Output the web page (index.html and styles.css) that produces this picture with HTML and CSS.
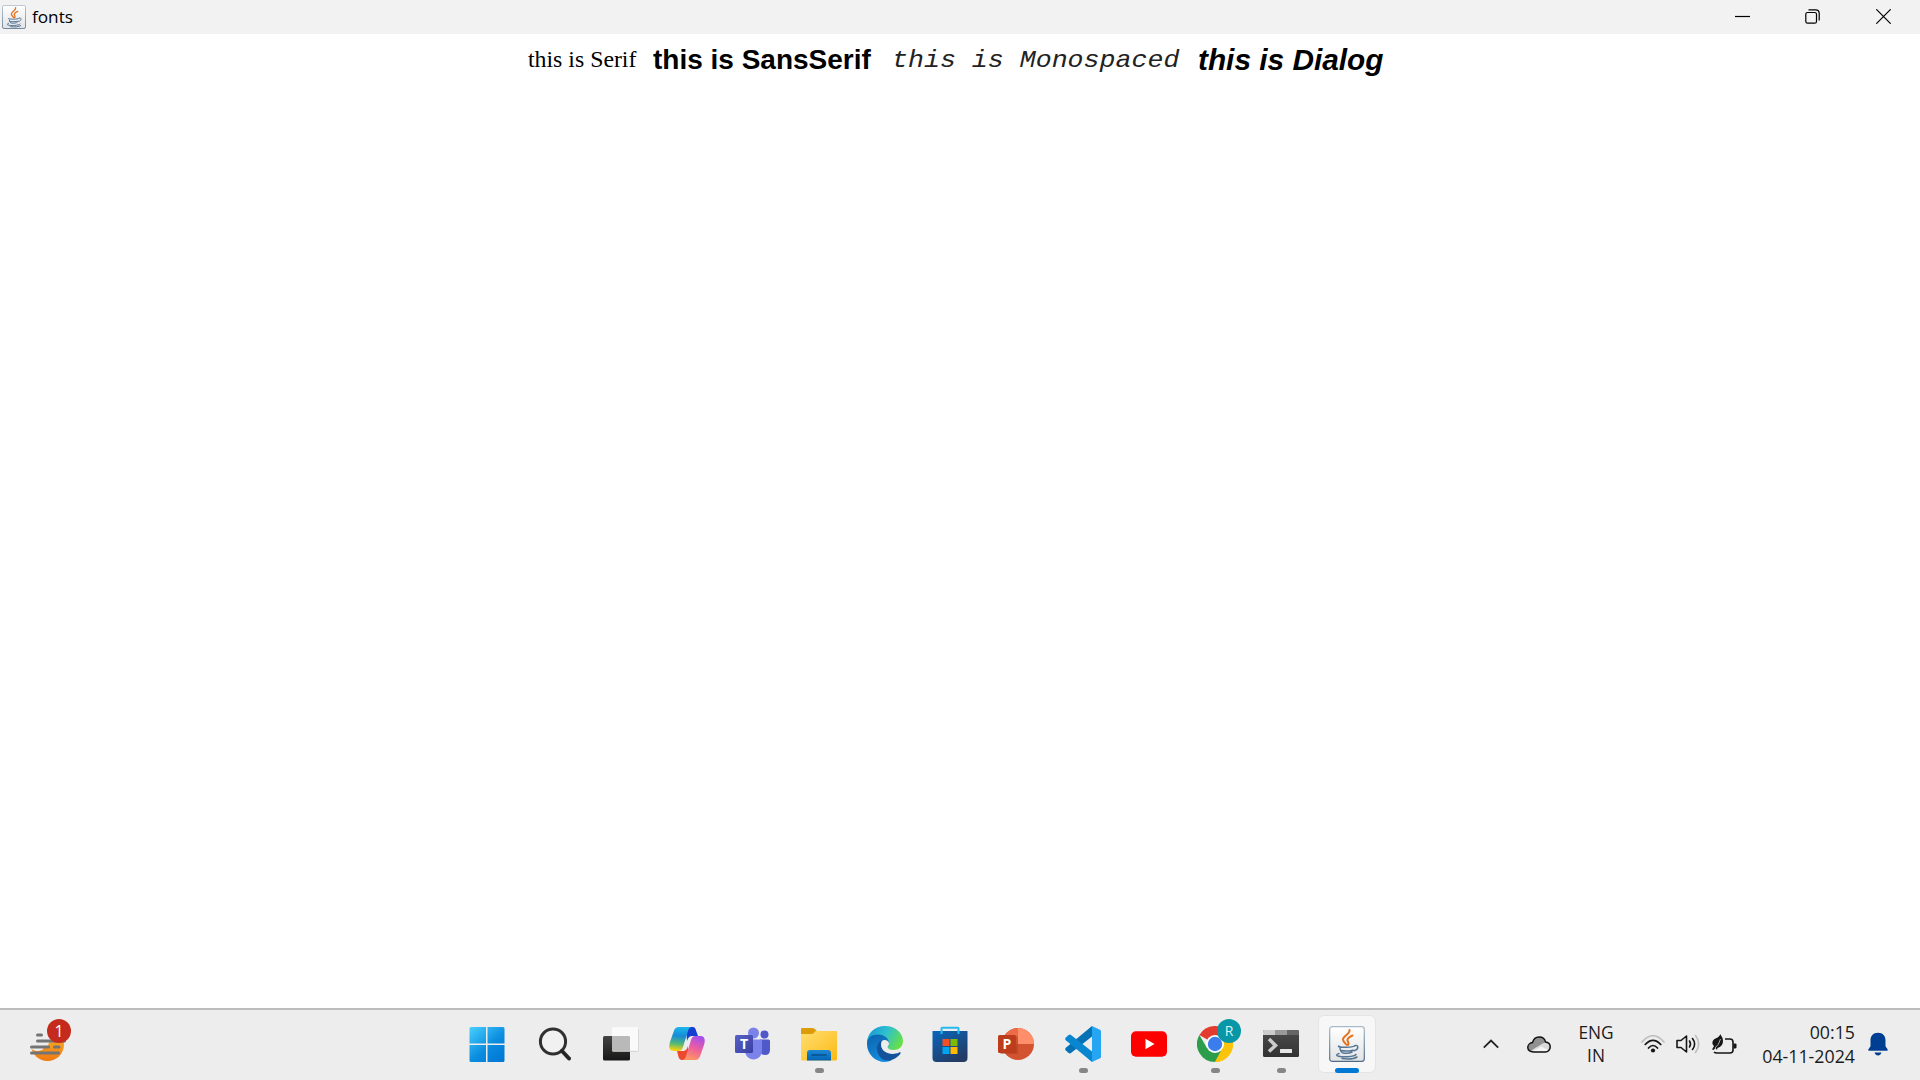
FILE: index.html
```html
<!DOCTYPE html>
<html lang="en">
<head>
<meta charset="utf-8">
<title>fonts</title>
<link rel="stylesheet" href="styles.css">
</head>
<body>
<svg class="defs" width="0" height="0" aria-hidden="true">
  <defs>
    <linearGradient id="javaBg" x2="0" y2="1"><stop stop-color="#fff"/><stop offset="1" stop-color="#e2e3e5"/></linearGradient>
    <linearGradient id="javaEdge" x2="0" y2="1"><stop stop-color="#a9bac8"/><stop offset="1" stop-color="#4e6b86"/></linearGradient>
    <symbol id="java" viewBox="0 0 36 36">
      <rect x=".7" y=".7" width="34.6" height="34.6" rx="2.5" fill="url(#javaBg)" stroke="url(#javaEdge)" stroke-width="1.2"/>
      <g fill="none" stroke-linecap="round">
        <path d="M20.5 4c1 4-6.500 5.500-6.500 9.500 0 2 2 3.500 3.500 5.200M23.500 9.500c-3 1.300-5.500 2.800-5 5 .3 1.500 2 2.500.5 4.500" stroke="#e8701a" stroke-width="2"/>
        <path d="M10 20c-2 .8 2.500 1.300 7.500 1.200 4 0 7-.5 8-1.200M11 22.500c.5 3 1 4.500 4 4.700 3 .3 6 0 8-1.200M12 24.600c4 .8 8 .6 12-.4M25.500 19.700c4.500-1.500 4.500 3.800-.5 5M10 27.500c-7 2.500 3 3.700 9 3.200 4-.3 7-1 8-2.200M13 32.500c6 .8 12 .4 15-1.500" stroke="#557594" stroke-width="1.500"/>
      </g>
    </symbol>
  </defs>
</svg>
<header class="titlebar">
  <div class="caption"><svg class="caption-icon"><use href="#java"/></svg><span>fonts</span></div>
  <div class="controls">
    <svg viewBox="0 0 15 15"><path d="M0 7.500h15" class="line"/></svg>
    <svg viewBox="0 0 15 15"><rect x=".8" y="3.500" width="10.700" height="10.700" rx="1.800" class="line"/><path d="M3.500.8h7.200q3.500 0 3.500 3.500v7.200" class="line"/></svg>
    <svg viewBox="0 0 15 15"><path d="M.3.300l14.400 14.400M14.700.300L.3 14.700" class="line"/></svg>
  </div>
</header>
<main class="canvas">
  <span class="serif">this is Serif</span>
  <span class="sans">this is SansSerif</span>
  <span class="mono">this is Monospaced</span>
  <span class="dialog">this is Dialog</span>
</main>
<footer class="taskbar">
  <div class="weather">
    <svg width="42" height="46" viewBox="0 0 42 46">
      <defs><linearGradient id="sun" x2="0" y2="1"><stop stop-color="#fbc02d"/><stop offset="1" stop-color="#f07812"/></linearGradient></defs>
      <circle cx="18.500" cy="26.500" r="16.500" fill="url(#sun)"/>
      <path d="M0 8h24v13l-4 3q0 4-4 5H0z" fill="#ededed"/>
      <ellipse cx="8.500" cy="30" rx="6" ry="3" fill="#eee"/>
      <path d="M8.500 17h4M8.500 23h27M2.500 29h17M25.500 29h4.500M2.500 35h27" stroke="#747474" stroke-width="3" stroke-linecap="round"/>
    </svg>
    <span class="count">1</span>
  </div>
  <nav class="apps">
    <div class="app start"><svg viewBox="0 0 36 36"><defs><linearGradient id="win" gradientUnits="userSpaceOnUse" x1="0" y1="0" x2="30" y2="36"><stop stop-color="#4bd3ff"/><stop offset=".6" stop-color="#0b8de0"/><stop offset="1" stop-color="#0078d4"/></linearGradient></defs><path d="M2 1h15v16.500H.5V2.500Q.5 1 2 1zM18.500 1h15.500q1.500 0 1.500 1.500v15h-17zM.5 19H17v17H2Q.5 36 .5 34.500zM18.500 19h17v15.500q0 1.500-1.500 1.500H18.500z" fill="url(#win)"/></svg></div>
    <div class="app"><svg viewBox="0 0 36 36"><circle cx="16" cy="15.500" r="12.600" fill="#f2f2f2" fill-opacity=".75" stroke="#303030" stroke-width="3"/><path d="M25 25l7 7.500" stroke="#252525" stroke-width="4" stroke-linecap="round"/></svg></div>
    <div class="app"><svg viewBox="0 0 36 36"><defs><linearGradient id="tvb" x2="0" y2="1"><stop stop-color="#454340"/><stop offset="1" stop-color="#171717"/></linearGradient></defs><rect y="10" width="27" height="24.500" rx="1.500" fill="url(#tvb)"/><path d="M9 10h16.500q1.500 0 1.500 1.500V25H9z" fill="#b9b9b9"/><path d="M10.500 1H34q1.700 0 1.700 1.700v21.500q0 1-1.200 1H27V11.500Q27 10 25.500 10H9V2.500Q9 1 10.500 1z" fill="#fafafa"/><path d="M9.500 25.300h25q1.200 0 1.200-1V3" stroke="#d2d2d2" fill="none"/></svg></div>
    <div class="app"><svg viewBox="0 0 36 36"><defs>
      <linearGradient id="cp1" x1=".3" y1="0" x2=".2" y2="1"><stop stop-color="#1cb5e9"/><stop offset=".35" stop-color="#158bd7"/><stop offset=".68" stop-color="#51b879"/><stop offset=".95" stop-color="#f3d012"/></linearGradient>
      <linearGradient id="cp2" x1=".7" y1="0" x2=".35" y2="1"><stop stop-color="#a44eed"/><stop offset=".5" stop-color="#ed5e9e"/><stop offset="1" stop-color="#ff9860"/></linearGradient></defs>
      <path d="M17 1h6c3 0 3.500 1.500 4.200 4L29 10h-5c-4 0-5 2-6 5z" fill="#153fd0"/>
      <path d="M19 34h-6c-2 0-3-1.300-3.600-3.500L8 25h5c4 0 5-2 6-5z" fill="#ed4930"/>
      <path d="M10 1h13c-2 0-3.200 1.500-4 4l-5 16c-.8 2.700-2 4-4.500 4H5c-5 0-5.500-4-4-9L4.500 6C5.500 2.500 7 1 10 1z" fill="url(#cp1)"/>
      <path d="M26 34H13c2 0 3.200-1.500 4-4l5-16c.8-2.700 2-4 4.500-4H31c5 0 5.500 4 4 9l-3.500 10c-1 3.500-2.500 5-5.500 5z" fill="url(#cp2)"/></svg></div>
    <div class="app nudged"><svg viewBox="0 0 36 36"><defs><linearGradient id="tm" x2="1" y2="1"><stop stop-color="#5861c6"/><stop offset="1" stop-color="#3a3fa2"/></linearGradient></defs><circle cx="30.500" cy="8.500" r="4" fill="#5059c9"/><path d="M26 13.500h8.500q1.500 0 1.500 1.500v9q0 5-5 5-5 0-5-5z" fill="#5059c9"/><circle cx="19.500" cy="7" r="5.500" fill="#7b83eb"/><path d="M11 13.500h15.500q1.500 0 1.500 1.500v9c0 6-4 9.500-8.500 9.500S11 30 11 24z" fill="#7b83eb"/><rect x="1" y="9" width="18" height="18" rx="1.500" fill="url(#tm)"/><text x="10" y="23" class="glyph" font-size="14">T</text></svg></div>
    <div class="app open"><svg viewBox="0 0 36 36"><defs><linearGradient id="fold" x2="1" y2="1"><stop stop-color="#ffdf70"/><stop offset="1" stop-color="#fdb915"/></linearGradient><linearGradient id="foldb" x2="0" y2="1"><stop stop-color="#1d88d5"/><stop offset="1" stop-color="#0565b5"/></linearGradient></defs><path d="M1 2h10q2 0 3 1.300L16 5h18q2 0 2 2v5H0V3q0-1 1-1z" fill="#dc9b08"/><path d="M0 8h10q2 0 3-1.300L14.500 5H35q1 0 1 1v27q0 1.500-1.500 1.500h-33Q0 34.500 0 33z" fill="url(#fold)"/><path d="M6 34.500V27q0-3 3-3h18q3 0 3 3v7.500z" fill="url(#foldb)"/><path d="M11 29h14" stroke="#06508e" stroke-width="1.600" stroke-linecap="round"/></svg></div>
    <div class="app"><svg viewBox="0 0 36 36"><defs><linearGradient id="eg" x1="0" y1=".2" x2="1" y2=".6"><stop stop-color="#1596dc"/><stop offset=".5" stop-color="#30c2cc"/><stop offset="1" stop-color="#69e044"/></linearGradient><linearGradient id="eb" x1="0" y1="0" x2=".4" y2="1"><stop stop-color="#0b63ad"/><stop offset="1" stop-color="#158bdc"/></linearGradient></defs><path d="M0 17C0 7 8 0 18 0c11 0 18 7.500 18 15 0 6-4.500 9-9.500 9-4 0-6-1.500-6-3 0-1 1.500-1.500 1.500-4 0-2-2-4-4-4z" fill="url(#eg)"/><path d="M0 18C0 11.500 5 8.500 11 8.500c7 0 11 4.500 11 8.500-1-2.500-3-3.500-5-3-4 1-6 7-3 13 2 4 6 7 11 7.300C22 35.500 20 36 18 36 8 36 0 28 0 18z" fill="url(#eb)"/><path d="M14.500 14.500C8 18 9 27 14 32c5 4.500 14 3 19.500-4.500.7-1-.3-1.700-1.500-1-7 3.500-18 .5-18-8z" fill="#12539b"/></svg></div>
    <div class="app nudged"><svg viewBox="0 0 36 36"><defs><linearGradient id="st" x2=".6" y2="1"><stop stop-color="#0867bd"/><stop offset="1" stop-color="#243b65"/></linearGradient></defs><path d="M.5 5h35v27q0 4-4 4h-27q-4 0-4-4z" fill="url(#st)"/><path d="M9.500 8V2.500q0-.8.800-.8h15.400q.8 0 .8.800V8" fill="none" stroke="#25baf2" stroke-width="2"/><path d="M10.500 13h7v7h-7z" fill="#f25022"/><path d="M18.500 13h7v7h-7z" fill="#7fba00"/><path d="M10.500 21h7v7h-7z" fill="#00a4ef"/><path d="M18.500 21h7v7h-7z" fill="#ffb900"/></svg></div>
    <div class="app nudged"><svg viewBox="0 0 36 36"><circle cx="20" cy="18" r="16" fill="#d35230"/><path d="M4 18A16 16 0 0 1 20 2v16z" fill="#ed6c47"/><path d="M20 2a16 16 0 0 1 16 16H20z" fill="#ff8f6b"/><rect x="2" y="10" width="18" height="18" rx="1.500" fill="#a83c20" opacity=".5"/><rect y="9" width="18" height="18" rx="1.500" fill="#bd3c1c"/><text x="9" y="23" class="glyph" font-size="14">P</text></svg></div>
    <div class="app open"><svg viewBox="0 0 36 36"><path d="M27 0v10.500L6 27q-1.200.8-2.400-.1L.8 24.500q-1.200-1.500 0-2.800z" fill="#0672b6"/><path d="M27 36V25.500L6 9q-1.200-.8-2.400.1L.8 11.500q-1.200 1.500 0 2.800z" fill="#0887d0"/><path d="M27 0l8 3.700q1 .5 1 1.500v25.600q0 1-1 1.500L27 36z" fill="#26a5f3"/></svg></div>
    <div class="app"><svg viewBox="0 0 36 36"><rect y="5.300" width="36" height="25.400" rx="5" fill="#f00"/><path d="M14.500 12.700v10.600l9-5.300z" fill="#fff"/></svg></div>
    <div class="app open"><svg viewBox="0 0 36 36"><path d="M18 18L2.400 9A18 18 0 0 1 33.600 9z" fill="#e33b2e"/><path d="M18 18L33.600 9A18 18 0 0 1 18 36z" fill="#fcc30b"/><path d="M18 18l-8 4L2.400 9A18 18 0 0 0 18 36l7-13z" fill="#2c9e4b"/><path d="M18 9.500h15.800A18 18 0 0 1 18 36l7.500-13z" fill="#fcc30b"/><circle cx="18" cy="18" r="9" fill="#fff"/><circle cx="18" cy="18" r="7.200" fill="#3b7ded"/></svg><span class="profile">R</span></div>
    <div class="app open"><svg viewBox="0 0 36 36"><defs><linearGradient id="term" x2="0" y2="1"><stop stop-color="#4b4b4b"/><stop offset="1" stop-color="#333"/></linearGradient></defs><rect y="4" width="36" height="27" rx="1.500" fill="url(#term)"/><path d="M1.500 4H12v5H0V5.500Q0 4 1.500 4z" fill="#ccc"/><path d="M12 4h12v5H12z" fill="#999"/><path d="M24 4h10.500Q36 4 36 5.500V9H24z" fill="#666"/><path d="M6 13l6.500 6.500L6 25.500" fill="none" stroke="#ccc" stroke-width="3.500"/><rect x="17" y="23" width="12" height="4" rx=".5" fill="#e7e7e7"/></svg></div>
    <div class="app active"><svg><use href="#java"/></svg></div>
  </nav>
  <div class="tray">
    <svg class="chevron" width="16" height="10" viewBox="0 0 16 10"><path d="M.8 8.700L8 1.500l7.200 7.200" fill="none" stroke="#222" stroke-width="1.800"/></svg>
    <svg class="cloud" width="24" height="17" viewBox="0 0 24 17"><path d="M6.500 16C3 16 .8 14 .8 11.500S3 6.800 5.500 6.500C6.500 3 9 1 12 1c3.500 0 6 2 6.500 5 3 .3 4.700 2.500 4.700 5s-2 5-5 5z" fill="#d9d9d9"/><path d="M1 12C1.500 8 4 7 5.500 6.500 6.500 3 9 1 12 1c3.500 0 6 2 6.500 5L14 8.500 4 14.500Q1 14 1 12z" fill="#919191"/><path d="M5 15.500l9-5 8.500 4-4 1.500z" fill="#f4f4f4"/><path d="M6.500 16C3 16 .8 14 .8 11.500S3 6.800 5.500 6.500C6.500 3 9 1 12 1c3.500 0 6 2 6.500 5 3 .3 4.700 2.500 4.700 5s-2 5-5 5z" fill="none" stroke="#111" stroke-width="1.500"/></svg>
    <div class="lang"><span>ENG</span><span>IN</span></div>
    <div class="status">
      <svg width="24" height="18" viewBox="0 0 24 18"><g fill="none" stroke-width="1.700" stroke-linecap="round"><path d="M1 7q11-12.500 22 0" stroke="#bdbdbd"/><path d="M4.200 9.500q7.800-8.300 15.600 0M7.500 13q4.500-5 9 0" stroke="#161616"/></g><circle cx="12" cy="15.500" r="2.100" fill="#161616"/></svg>
      <svg width="25" height="20" viewBox="0 0 25 20"><g fill="none" stroke-width="1.600" stroke-linecap="round" stroke-linejoin="round"><path d="M1 6.500h4L10.500 2v16L5 13.500H1z" stroke="#161616"/><path d="M13.500 7q2 3 0 6M16.500 4.500q4.200 5.500 0 11" stroke="#161616"/><path d="M19.500 1.500q6.500 8.500 0 17" stroke="#bdbdbd"/></g></svg>
      <svg width="25" height="21" viewBox="0 0 25 21"><path d="M13 5h5q3 0 3 3v8q0 3-3 3H5q-2 0-3-1" fill="none" stroke="#161616" stroke-width="1.600"/><path d="M21.500 9.500h1.500q1.500 0 1.500 1v3q0 1-1.500 1h-1.500z" fill="#161616"/><path d="M8.500 0c.3 2 2.500 3 2.500 7 0 3.500-2 6-5.500 7L5 16l-1.500-2-2 2-1.500-.5 2-3.500C-1 9 .5 6 3.500 4.500 6 3.500 7.500 2.500 8.500 0z" fill="#161616"/><path d="M8.500 5Q7 11 3 14" fill="none" stroke="#ededed" stroke-width=".7"/></svg>
    </div>
    <div class="clock"><span>00:15</span><span>04-11-2024</span></div>
    <svg class="bell" width="20" height="24" viewBox="0 0 20 24"><path d="M10 .8c-5 0-7.500 3.500-7.500 7.500v6L.3 17.500q-.4 1.200.8 1.200h17.800q1.200 0 .8-1.200l-2.200-3.200v-6C17.500 4.300 15 .8 10 .8zM6.500 20.500h7q-1 3-3.500 3t-3.500-3z" fill="#003e92"/></svg>
  </div>
</footer>
</body>
</html>
```
FILE: styles.css
```css
* { box-sizing: border-box; }
body {
  margin: 0;
  width: 1920px;
  height: 1080px;
  display: flex;
  flex-direction: column;
  overflow: hidden;
  background: #fff;
  color: #000;
  font-family: "Open Sans", "Noto Sans", sans-serif;
}
svg { display: block; flex: none; }
.defs { position: absolute; }

.titlebar {
  height: 34px;
  flex: none;
  display: flex;
  align-items: center;
  justify-content: space-between;
  padding: 0 29px 1px 2px;
  background: #f2f2f2;
}
.caption { display: flex; align-items: center; gap: 6px; font-size: 17.2px; line-height: 33px; }
.caption-icon { width: 24px; height: 24px; }
.controls { display: flex; gap: 55px; }
.controls svg { width: 15px; height: 15px; }
.controls svg:last-child { margin-left: 1px; }
.line { fill: none; stroke: #000; stroke-width: 1.2; }

.canvas {
  flex: 1;
  display: flex;
  align-items: flex-start;
  padding: 7px 0 0 528px;
  white-space: nowrap;
}
.canvas .serif { width: 125px; font: 23.8px/37px "Liberation Serif", serif; }
.canvas .sans { width: 239px; font: bold 28px/37px "Liberation Sans", sans-serif; }
.canvas .mono {
  width: 306px;
  font: italic 23.5px/39px "Liberation Mono", monospace;
  color: #222;
  transform: scaleX(1.132);
  transform-origin: left;
}
.canvas .dialog { font: italic bold 29.8px/38px "Liberation Sans", sans-serif; }

.taskbar {
  height: 72px;
  flex: none;
  display: flex;
  border-top: 2px solid #bcbcbc;
  background: #ededed;
  color: #1b1b1b;
}
.weather { width: 456px; padding: 8px 0 0 29px; position: relative; }
.count {
  position: absolute;
  left: 47px;
  top: 9px;
  width: 24px;
  height: 24px;
  border-radius: 50%;
  background: #c42b1c;
  color: #fff;
  font-size: 16px;
  line-height: 24px;
  text-align: center;
}
.apps { display: flex; }
.app {
  position: relative;
  width: 66px;
  height: 68px;
  display: flex;
  align-items: center;
  justify-content: center;
}
.app svg { width: 36px; height: 36px; }
.app.start svg { margin-left: -4px; }
.app.nudged svg { margin-left: -2px; }
.glyph { font-family: "Open Sans", sans-serif; font-weight: 700; fill: #fff; text-anchor: middle; }
.open::after, .active::after {
  content: "";
  position: absolute;
  left: 29px;
  top: 58px;
  width: 9px;
  height: 5px;
  border-radius: 3px;
  background: #868686;
}
.active::after { left: 21px; width: 24px; background: #0078d4; }
.active::before {
  content: "";
  position: absolute;
  inset: 5px 4px 5px 4px;
  border: 1px solid #e4e4e4;
  border-radius: 6px;
  background: #f7f7f7;
}
.active svg { position: relative; }
.profile {
  position: absolute;
  left: 35px;
  top: 9px;
  width: 24px;
  height: 24px;
  border-radius: 50%;
  background: #0797a6;
  color: #d9f2f4;
  font-size: 14px;
  line-height: 24px;
  text-align: center;
}

.tray { flex: 1; display: flex; height: 68px; align-items: center; padding-left: 103px; }
.cloud { margin-left: 28px; }
.lang {
  width: 40px;
  margin-left: 25px;
  display: flex;
  flex-direction: column;
  align-items: center;
  font-size: 17.3px;
  line-height: 23px;
}
.status { display: flex; align-items: center; gap: 11px; margin-left: 25px; }
.clock {
  width: 118px;
  display: flex;
  flex-direction: column;
  align-items: flex-end;
  font-size: 17.8px;
  line-height: 24px;
}
.bell { margin-left: 13px; }
```
